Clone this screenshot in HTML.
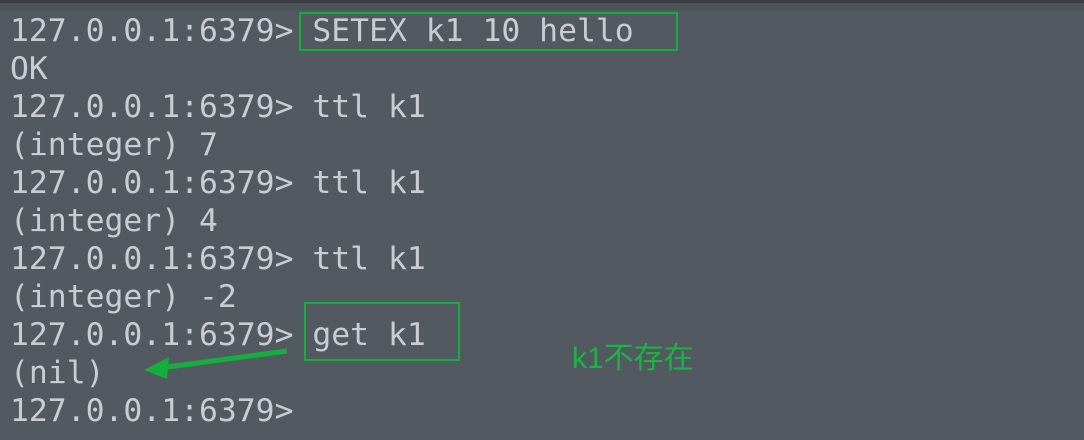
<html><head><style>
body{margin:0;width:1084px;height:440px;background:#535961;overflow:hidden;position:relative}
.top{position:absolute;left:0;top:0;width:1084px;height:3px;background:#3b3f45}
.top2{position:absolute;left:0;top:3px;width:1084px;height:7px;background:#4d535a}
pre{position:absolute;left:10px;top:12px;margin:0;font-family:"DejaVu Sans Mono",monospace;font-size:31.4px;line-height:38px;color:#c9cdd3}
.box{position:absolute;border:2px solid #14b03c}
.cn{position:absolute;left:572px;top:333px;font-family:"Liberation Sans","Noto Sans CJK SC",sans-serif;font-size:30px;color:#1bb443}
</style></head><body>
<div class="top"></div><div class="top2"></div>
<pre>127.0.0.1:6379> SETEX k1 10 hello
OK
127.0.0.1:6379> ttl k1
(integer) 7
127.0.0.1:6379> ttl k1
(integer) 4
127.0.0.1:6379> ttl k1
(integer) -2
127.0.0.1:6379> get k1
(nil)
127.0.0.1:6379></pre>
<div class="box" style="left:299px;top:12px;width:375px;height:35px"></div>
<div class="box" style="left:304px;top:302px;width:152px;height:55px"></div>
<div class="cn">k1不存在</div>
<svg style="position:absolute;left:0;top:0" width="1084" height="440"><path d="M287,351 L160,368" stroke="#14b03c" stroke-width="5"/><polygon points="144,370 169,357 167,379" fill="#14b03c"/></svg>
</body></html>
